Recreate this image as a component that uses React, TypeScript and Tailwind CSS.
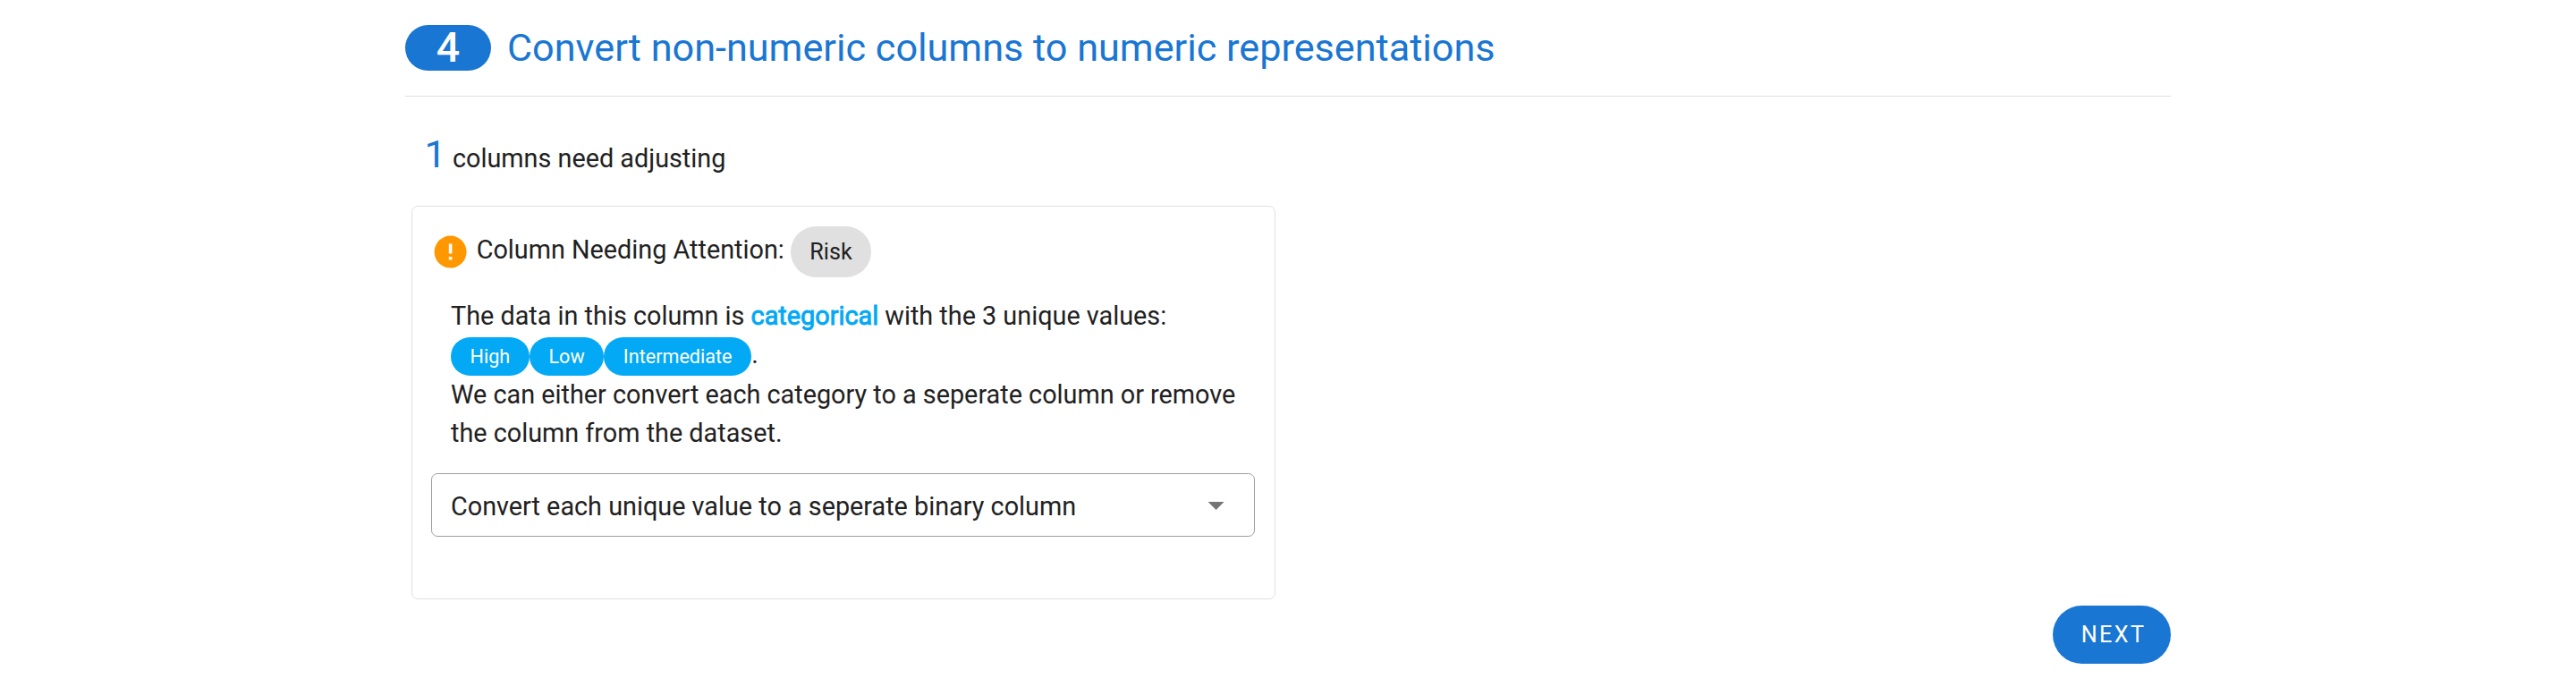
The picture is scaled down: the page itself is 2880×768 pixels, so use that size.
const categories = ["High", "Low", "Intermediate"];

function AlertCircle() {
  return (
    <svg viewBox="0 0 24 24" className="size-[43.2px] shrink-0 fill-[#ff9800]">
      <path d="M13,13H11V7H13M13,17H11V15H13M12,2A10,10 0 0,0 2,12A10,10 0 0,0 12,22A10,10 0 0,0 22,12A10,10 0 0,0 12,2Z" />
    </svg>
  );
}

function MenuDown() {
  return (
    <svg viewBox="0 0 24 24" className="size-[43.2px] shrink-0 fill-[#757575]">
      <path d="M7,10L12,15L17,10H7Z" />
    </svg>
  );
}

function StepHeader() {
  return (
    <header className="flex h-[108px] items-center gap-[18px] border-b border-[#e0e0e0] text-[#1976d2]">
      <span className="flex h-[51px] w-24 items-center justify-center rounded-full bg-[#1976d2] text-[46.4px] font-medium text-white">
        4
      </span>
      <h1 className="pt-[2px] text-[43.2px] whitespace-nowrap">Convert non-numeric columns to numeric representations</h1>
    </header>
  );
}

function ColumnCard() {
  return (
    <section className="ml-[7px] h-[440px] w-[966px] rounded-[7.2px] border border-[#e0e0e0] px-[21.4px] pt-[22px]">
      <div className="flex h-[57.6px] items-center gap-[7.1px] whitespace-nowrap">
        <AlertCircle />
        <span className="mb-[5px]">Column Needing Attention:</span>
        <span className="flex h-[57px] items-center rounded-full bg-[#e0e0e0] px-[21.3px] text-[25.2px]">Risk</span>
      </div>

      <div className="mt-[21px] pl-[21.6px] leading-[43.2px] whitespace-nowrap">
        <p>
          The data in this column is{" "}
          <span className="text-[#03a9f4] [-webkit-text-stroke:0.9px_#03a9f4]">categorical</span> with the 3 unique
          values:
        </p>
        <div className="flex h-[45.4px] pt-[2.4px]">
          {categories.map((name) => (
            <span
              key={name}
              className="flex h-[43px] items-center rounded-full bg-[#03a9f4] px-[21.6px] text-[21.6px] text-white"
            >
              {name}
            </span>
          ))}
          <span className="-mt-0.5">.</span>
        </div>
        <p>
          We can either convert each category to a seperate column or remove
          <br />
          the column from the dataset.
        </p>
      </div>

      <button
        type="button"
        className="mt-[22px] flex h-[71px] w-[921px] items-center justify-between rounded-[7.2px] border border-[#9e9e9e] pr-[21px] pl-[20.6px]"
      >
        <span className="pt-[5px]">Convert each unique value to a seperate binary column</span>
        <MenuDown />
      </button>
    </section>
  );
}

export default function App() {
  return (
    <main className="h-[768px] bg-white font-['Roboto',sans-serif] text-[28.8px] text-[#212121]">
      <div className="mx-auto w-[1974px]">
        <StepHeader />
        <p className="mt-[36px] mb-[28px] flex h-[58px] items-baseline gap-[7.1px] pl-[21.6px]">
          <span className="text-[43.2px] leading-[58px] text-[#1976d2]">1</span>
          <span>columns need adjusting</span>
        </p>
        <ColumnCard />
        <div className="mt-[7px] flex justify-end">
          <button
            type="button"
            className="h-[65px] w-[132px] rounded-full bg-[#1976d2] pl-[4px] text-[25.2px] tracking-[2.4px] text-white"
          >
            NEXT
          </button>
        </div>
      </div>
    </main>
  );
}
